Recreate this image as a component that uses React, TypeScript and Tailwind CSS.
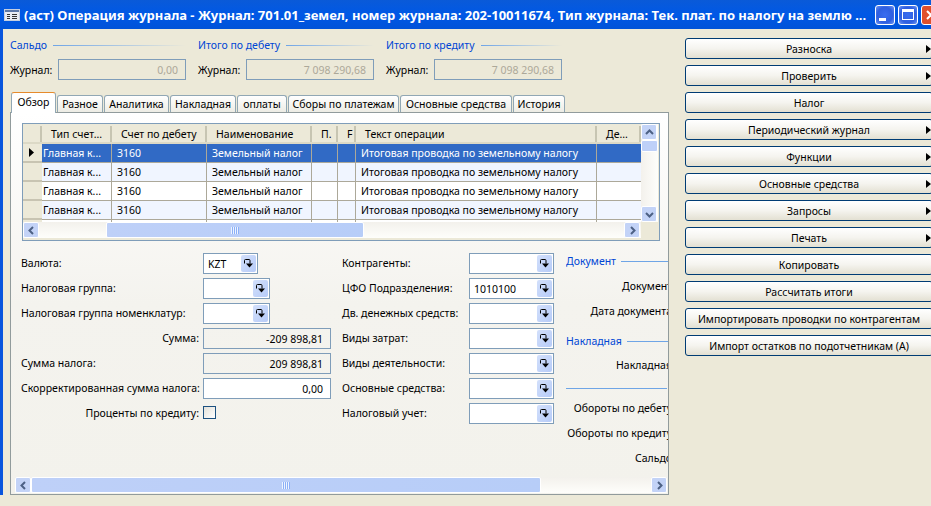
import type { ReactNode } from "react";

const menuButtons = [
	{ label: "Разноска", arrow: true },
	{ label: "Проверить", arrow: true },
	{ label: "Налог", arrow: false },
	{ label: "Периодический журнал", arrow: true },
	{ label: "Функции", arrow: true },
	{ label: "Основные средства", arrow: true },
	{ label: "Запросы", arrow: true },
	{ label: "Печать", arrow: true },
	{ label: "Копировать", arrow: false },
	{ label: "Рассчитать итоги", arrow: false },
	{ label: "Импортировать проводки по контрагентам", arrow: false },
	{ label: "Импорт остатков по подотчетникам (А)", arrow: false },
];

const tabs = [
	{ label: "Разное", width: "w-[46px]" },
	{ label: "Аналитика", width: "w-[65px]" },
	{ label: "Накладная", width: "w-[66px]" },
	{ label: "оплаты", width: "w-[50px]" },
	{ label: "Сборы по платежам", width: "w-[111px]" },
	{ label: "Основные средства", width: "w-[112px]" },
	{ label: "История", width: "w-[52px]" },
];

const gridCols = "grid grid-cols-[19px_70px_95px_105px_26px_18px_241px_44px]";

const middleFields = [
	["Контрагенты:", ""],
	["ЦФО Подразделения:", "1010100"],
	["Дв. денежных средств:", ""],
	["Виды затрат:", ""],
	["Виды деятельности:", ""],
	["Основные средства:", ""],
	["Налоговый учет:", ""],
];

function Totals({ title, value }: { title: string; value: string }) {
	return (
		<div className="w-[188px]">
			<div className="flex h-[14px] items-center gap-[6px] text-[#0046d5]">
				<span>{title}</span>
				<span className="mr-[12px] h-px flex-1 bg-gradient-to-r from-[#6fa5e6] to-[#ece9d8]" />
			</div>
			<div className="mt-[7px] flex h-[21px] items-center">
				<span className="w-[48px]">Журнал:</span>
				<span className="flex h-[21px] w-[128px] items-center justify-end border border-[#7f9db9] pr-[7px] text-[#aca899]">
					{value}
				</span>
			</div>
		</div>
	);
}

function Tab({ label, width }: { label: string; width: string }) {
	return (
		<div
			className={`flex h-[18px] ${width} items-center justify-center rounded-t-[3px] border border-b-0 border-[#91a7b4] bg-gradient-to-b from-white to-[#ecebe3] pb-px`}
		>
			{label}
		</div>
	);
}

function ScrollArrow({ dir }: { dir: "up" | "down" | "left" | "right" }) {
	const points = {
		up: "3,8 6.5,4.5 10,8",
		down: "3,5 6.5,8.5 10,5",
		left: "8,3 4.5,6.5 8,10",
		right: "5,3 8.5,6.5 5,10",
	}[dir];
	return (
		<div className="flex h-[16px] w-[16px] shrink-0 items-center justify-center rounded-[2px] border border-white bg-[#c3d3f7]">
			<svg width="13" height="13" viewBox="0 0 13 13">
				<polyline points={points} fill="none" stroke="#4d6185" strokeWidth="2" />
			</svg>
		</div>
	);
}

function HScroll({ left, thumb, right }: { left: string; thumb: string; right: string }) {
	return (
		<div className="flex h-[16px] items-center bg-gradient-to-b from-[#f3f1ec] to-[#fefefb]">
			<ScrollArrow dir="left" />
			<div className={`h-full ${left}`} />
			<div
				className={`flex h-full ${thumb} items-center justify-center rounded-[2px] border border-white bg-gradient-to-r from-[#bed0f8] to-[#b7cdf8]`}
			>
				<span className="h-[7px] w-[8px] bg-[repeating-linear-gradient(90deg,#eef4fe_0,#eef4fe_1px,#8cb0f8_1px,#8cb0f8_2px)]" />
			</div>
			<div className={`h-full ${right}`} />
			<ScrollArrow dir="right" />
		</div>
	);
}

function Cell({ children, selected, last }: { children?: ReactNode; selected: boolean; last?: boolean }) {
	return (
		<div
			className={`overflow-hidden whitespace-nowrap border-b border-[#aca899] leading-[19px] ${last ? "" : "border-r"} ${selected ? "text-white" : ""}`}
		>
			{children}
		</div>
	);
}

function GridRow({ selected, alt }: { selected: boolean; alt: boolean }) {
	const bg = selected ? "bg-[#316ac5]" : alt ? "bg-[#f0f5ff]" : "bg-white";
	return (
		<div className={`${gridCols} h-[19px] ${bg}`}>
			<div className="flex items-center border-b-[2px] border-b-[#c8c4b2] bg-[#ece9d8] pl-[6px]">
				{selected && (
					<svg width="5" height="9" viewBox="0 0 5 9">
						<path d="M0 0 L5 4.5 L0 9 Z" fill="#000" />
					</svg>
				)}
			</div>
			<Cell selected={selected}>
				<span className="pl-[1px]">Главная к...</span>
			</Cell>
			<Cell selected={selected}>
				<span className="pl-[5px]">3160</span>
			</Cell>
			<Cell selected={selected}>
				<span className="pl-[5px]">Земельный налог</span>
			</Cell>
			<Cell selected={selected} />
			<Cell selected={selected} />
			<Cell selected={selected}>
				<span className="pl-[5px]">Итоговая проводка по земельному налогу</span>
			</Cell>
			<Cell selected={selected} last />
		</div>
	);
}

function HeaderCell({ children }: { children?: ReactNode }) {
	return (
		<div className="flex h-[16px] items-center overflow-hidden whitespace-nowrap border-r-[2px] border-r-[#c7c5b2] pl-[9px]">
			{children}
		</div>
	);
}

function Grid() {
	return (
		<div className="flex h-[118px] w-[638px] border border-[#7f9db9] bg-[#ece9d8]">
			<div className="flex w-[618px] flex-col">
				<div className="h-[2px]" />
				<div className={`${gridCols} h-[18px] border-b-[2px] border-[#dcd9c6]`}>
					<HeaderCell />
					<HeaderCell>Тип счет...</HeaderCell>
					<HeaderCell>Счет по дебету</HeaderCell>
					<HeaderCell>Наименование</HeaderCell>
					<HeaderCell>П.</HeaderCell>
					<HeaderCell>F</HeaderCell>
					<HeaderCell>Текст операции</HeaderCell>
					<HeaderCell>Де...</HeaderCell>
				</div>
				<div className="h-[78px] overflow-hidden">
					<GridRow selected alt={false} />
					<GridRow selected={false} alt />
					<GridRow selected={false} alt={false} />
					<GridRow selected={false} alt />
					{/* start of the next row, cut by the scrollbar */}
					<div className={`${gridCols} h-[2px] bg-white`}>
						<div className="bg-[#ece9d8]" />
						<div className="border-r border-[#aca899]" />
						<div className="border-r border-[#aca899]" />
						<div className="border-r border-[#aca899]" />
						<div className="border-r border-[#aca899]" />
						<div className="border-r border-[#aca899]" />
						<div className="border-r border-[#aca899]" />
						<div />
					</div>
				</div>
				<HScroll left="w-[67px]" thumb="w-[258px]" right="w-[260px]" />
			</div>
			<div className="flex h-[98px] w-[17px] flex-col bg-gradient-to-r from-[#f3f1ec] to-[#fefefb]">
				<ScrollArrow dir="up" />
				<div className="h-[12px] rounded-[2px] border border-white bg-[#bed0f8]" />
				<div className="flex-1" />
				<ScrollArrow dir="down" />
			</div>
		</div>
	);
}

function Lookup({ value, width = "w-[67px]" }: { value?: string; width?: string }) {
	return (
		<div className={`flex h-[21px] ${width} shrink-0 items-center justify-between border border-[#7f9db9] bg-white pl-[4px] pr-[1px]`}>
			<span>{value}</span>
			<div className="flex h-[17px] w-[15px] items-center justify-center rounded-[2px] bg-gradient-to-br from-[#d3e0fb] to-[#b6cbf8]">
				<svg width="11" height="11" viewBox="0 0 11 11">
					<path d="M1.5 5.5 V2.5 Q1.5 1.5 2.5 1.5 H6 Q7 1.5 7 2.5 V5.5" fill="none" stroke="#000" strokeWidth="1" />
					<path d="M3 5.5 H10 L6.5 9.5 Z" fill="#000" />
				</svg>
			</div>
		</div>
	);
}

function FormRow({ label, alignRight, children }: { label: string; alignRight?: boolean; children: ReactNode }) {
	return (
		<div className="flex h-[25px] w-[310px] items-start">
			<span className={`h-[21px] w-[178px] shrink-0 whitespace-nowrap leading-[21px] ${alignRight ? "text-right" : ""}`}>{label}</span>
			<span className="w-[4px] shrink-0" />
			{children}
		</div>
	);
}

function NumberField({ value, disabled }: { value: string; disabled?: boolean }) {
	return (
		<div
			className={`flex h-[21px] w-[128px] shrink-0 items-center justify-end border border-[#7f9db9] pr-[7px] ${disabled ? "" : "bg-white"}`}
		>
			{value}
		</div>
	);
}

function GroupLine({ title, lineWidth }: { title?: string; lineWidth: string }) {
	return (
		<div className="flex h-[14px] w-[102px] items-center justify-between text-[#0046d5]">
			{title && <span>{title}</span>}
			<span className={`h-px ${lineWidth} bg-[#6fa5e6]`} />
		</div>
	);
}

function CutLabel({ children, margin }: { children: string; margin: string }) {
	return <p className={`${margin} w-[106px] whitespace-nowrap text-right`}>{children}</p>;
}

function Panel() {
	return (
		<div className="relative -mt-px flex h-[383px] w-[659px] flex-col overflow-hidden border border-[#919b9c] bg-gradient-to-b from-white via-[#f4f3ee] to-[#f3f2ec]">
			<div className="flex-1 pl-[11px] pt-[10px]">
				<Grid />
				<div className="mt-[12px] flex">
					<div className="-ml-px w-[321px] shrink-0">
						<FormRow label="Валюта:">
							<Lookup value="KZT" width="w-[55px]" />
						</FormRow>
						<FormRow label="Налоговая группа:">
							<Lookup />
						</FormRow>
						<FormRow label="Налоговая группа номенклатур:">
							<Lookup />
						</FormRow>
						<FormRow label="Сумма:" alignRight>
							<NumberField value="-209 898,81" disabled />
						</FormRow>
						<FormRow label="Сумма налога:">
							<NumberField value="209 898,81" disabled />
						</FormRow>
						<FormRow label="Скорректированная сумма налога:">
							<NumberField value="0,00" />
						</FormRow>
						<FormRow label="Проценты по кредиту:" alignRight>
							<div className="mt-[3px] h-[13px] w-[13px] border border-[#1c5180] bg-gradient-to-br from-[#e3e1d9] to-white" />
						</FormRow>
					</div>
					<div className="w-[212px] shrink-0">
						{middleFields.map(([label, value]) => (
							<div key={label} className="flex h-[25px] items-start">
								<span className="h-[21px] w-[127px] shrink-0 whitespace-nowrap leading-[21px]">{label}</span>
								<Lookup value={value} width="w-[85px]" />
							</div>
						))}
					</div>
					<div className="ml-[12px] w-[102px] shrink-0 overflow-hidden pt-px">
						<GroupLine title="Документ" lineWidth="w-[47px]" />
						<CutLabel margin="mt-[11px]">Документ</CutLabel>
						<CutLabel margin="mt-[11px]">Дата документа</CutLabel>
						<div className="mt-[16px]">
							<GroupLine title="Накладная" lineWidth="w-[41px]" />
						</div>
						<CutLabel margin="mt-[10px]">Накладная</CutLabel>
						<div className="mt-[9px]">
							<GroupLine lineWidth="w-[101px]" />
						</div>
						<CutLabel margin="mt-[6px]">Обороты по дебету</CutLabel>
						<CutLabel margin="mt-[11px]">Обороты по кредиту</CutLabel>
						<CutLabel margin="mt-[11px]">Сальдо</CutLabel>
					</div>
				</div>
			</div>
			<div className="mb-px ml-[4px] mr-px">
				<HScroll left="w-0" thumb="w-[510px]" right="w-[110px]" />
			</div>
		</div>
	);
}

function MenuButton({ label, arrow }: { label: string; arrow: boolean }) {
	return (
		<button className="flex h-[21px] w-[248px] shrink-0 items-center rounded-[3px] border border-[#003c74] bg-gradient-to-b from-white via-[#f5f4ef] to-[#e3e0d2]">
			<span className="w-[6px]" />
			<span className="flex-1 whitespace-nowrap text-center">{label}</span>
			<span className="flex w-[6px] justify-start">
				{arrow && (
					<svg width="6" height="8" viewBox="0 0 6 8" className="shrink-0">
						<path d="M0 0 L5 4 L0 8 Z" fill="#000" />
					</svg>
				)}
			</span>
		</button>
	);
}

function WindowButton({ children, color }: { children: ReactNode; color: string }) {
	return (
		<div className={`flex h-[20px] w-[20px] shrink-0 items-center justify-center rounded-[3px] border border-white ${color}`}>
			{children}
		</div>
	);
}

export default function App() {
	return (
		<div className="h-[506px] w-[931px] overflow-hidden bg-[#ece9d8] font-['Noto_Sans','Liberation_Sans',sans-serif] text-[10.5px] leading-[14px] text-black">
			<div className="flex h-[29px] items-center bg-gradient-to-b from-[#0a5ad8] via-[#0058e6] to-[#0053d8] pl-[4px]">
				<svg width="16" height="12" viewBox="0 0 16 12" className="shrink-0">
					<rect x="0.5" y="0.5" width="15" height="11" fill="#e8ecf4" stroke="#c4cee0" />
					<rect x="1" y="1" width="14" height="2" fill="#5c78a8" />
					<path d="M3 5.5h3M3 7.5h3M3 9.5h3M8 5.5h5M8 7.5h5M8 9.5h5" stroke="#333" strokeWidth="1" />
				</svg>
				<div className="ml-[4px] w-[847px] shrink-0 whitespace-nowrap text-[13px] font-bold text-white">
					(аст) Операция журнала - Журнал: 701.01_земел, номер журнала: 202-10011674, Тип журнала: Тек. плат. по налогу на землю ...
				</div>
				<div className="ml-[4px] flex shrink-0 gap-[3px]">
					<WindowButton color="bg-[radial-gradient(circle,#3a6df0,#2f5fe0_60%,#6f96f4)]">
						<span className="mt-[10px] mr-[5px] h-[3px] w-[7px] bg-white" />
					</WindowButton>
					<WindowButton color="bg-[radial-gradient(circle,#3a6df0,#2f5fe0_60%,#6f96f4)]">
						<span className="h-[11px] w-[12px] border border-t-[3px] border-white" />
					</WindowButton>
					<WindowButton color="bg-[#e0502c]">
						<svg width="10" height="10" viewBox="0 0 10 10" className="shrink-0">
							<path d="M1 1 L9 9 M9 1 L1 9" stroke="#fff" strokeWidth="2" />
						</svg>
					</WindowButton>
				</div>
			</div>
			<div className="flex border-l-[3px] border-[#0855dd]">
				<div className="w-[682px] shrink-0 pl-[7px]">
					<div className="flex h-[63px] items-start pt-[9px]">
						<Totals title="Сальдо" value="0,00" />
						<Totals title="Итого по дебету" value="7 098 290,68" />
						<Totals title="Итого по кредиту" value="7 098 290,68" />
					</div>
					<div className="flex items-end gap-px pl-px">
						<div className="relative z-10 flex h-[21px] w-[45px] items-center justify-center rounded-t-[3px] border border-b-0 border-[#91a7b4] border-t-[#e68b2c] bg-white pb-[2px]">
							Обзор
						</div>
						{tabs.map((tab) => (
							<Tab key={tab.label} label={tab.label} width={tab.width} />
						))}
					</div>
					<Panel />
				</div>
				<div className="flex flex-col gap-[6px] pt-[9px]">
					{menuButtons.map((button) => (
						<MenuButton key={button.label} label={button.label} arrow={button.arrow} />
					))}
				</div>
			</div>
		</div>
	);
}
